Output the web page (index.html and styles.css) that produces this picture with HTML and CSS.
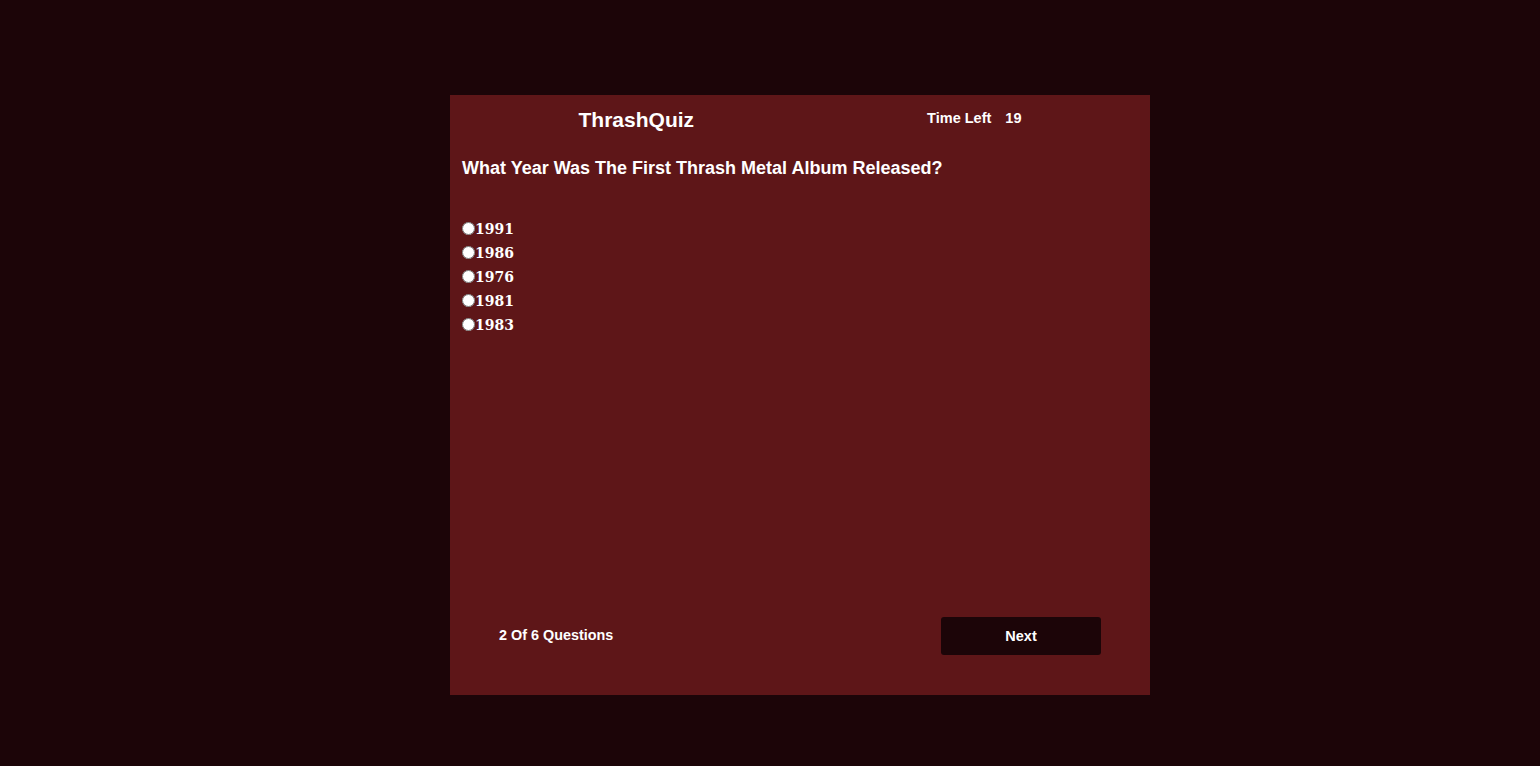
FILE: index.html
```html
<!DOCTYPE html>
<html lang="en">
<head>
<meta charset="utf-8">
<title>ThrashQuiz</title>
<link rel="stylesheet" href="styles.css">
</head>
<body>
<main class="page">
  <section class="quiz">
    <header class="quiz-header">
      <h1 class="title">ThrashQuiz</h1>
      <div class="timer"><span class="timer-label">Time Left</span><span class="timer-value">19</span></div>
    </header>
    <h2 class="question">What Year Was The First Thrash Metal Album Released?</h2>
    <form class="options">
      <label class="option"><input type="radio" name="answer" value="1991">1991</label>
      <label class="option"><input type="radio" name="answer" value="1986">1986</label>
      <label class="option"><input type="radio" name="answer" value="1976">1976</label>
      <label class="option"><input type="radio" name="answer" value="1981">1981</label>
      <label class="option"><input type="radio" name="answer" value="1983">1983</label>
    </form>
    <footer class="quiz-footer">
      <span class="progress">2 Of 6 Questions</span>
      <button class="next" type="button">Next</button>
    </footer>
  </section>
</main>
</body>
</html>
```
FILE: styles.css
```css
* { box-sizing: border-box; }
html, body { margin: 0; padding: 0; }
body {
  background: #1c0508;
  color: #ffffff;
  font-family: "Liberation Sans", Arial, sans-serif;
  height: 766px;
  overflow: hidden;
}
.page {
  display: flex;
  justify-content: center;
  padding: 95px 0 0 60px;
}
.quiz {
  width: 700px;
  height: 600px;
  background: #5e1618;
  display: flex;
  flex-direction: column;
  padding: 0 12px;
}
.quiz-header {
  display: flex;
  justify-content: space-around;
  align-items: center;
  height: 50px;
}
.title {
  margin: 0;
  font-size: 21px;
  font-weight: 700;
}
.timer {
  font-size: 14.5px;
  font-weight: 700;
  display: flex;
  gap: 14px;
  margin-bottom: 5px;
}
.question {
  margin: 0;
  font-size: 18px;
  font-weight: 700;
  line-height: 46px;
}
.options {
  display: flex;
  flex-direction: column;
  margin-top: 26px;
}
.option {
  display: flex;
  align-items: center;
  height: 24px;
  font-family: "DejaVu Serif", serif;
  font-size: 14px;
  font-weight: 700;
}
.option input {
  margin: 0 0 2px;
  width: 13px;
  height: 13px;
}
.quiz-footer {
  margin-top: auto;
  display: flex;
  justify-content: space-between;
  align-items: center;
  padding: 0 37px 40px;
}
.progress {
  font-size: 14.4px;
  font-weight: 700;
  margin-bottom: 3px;
}
.next {
  width: 160px;
  height: 38px;
  border: none;
  border-radius: 3px;
  background: #1c0508;
  color: #ffffff;
  font-family: inherit;
  font-size: 14.5px;
  font-weight: 700;
  cursor: pointer;
}
```
